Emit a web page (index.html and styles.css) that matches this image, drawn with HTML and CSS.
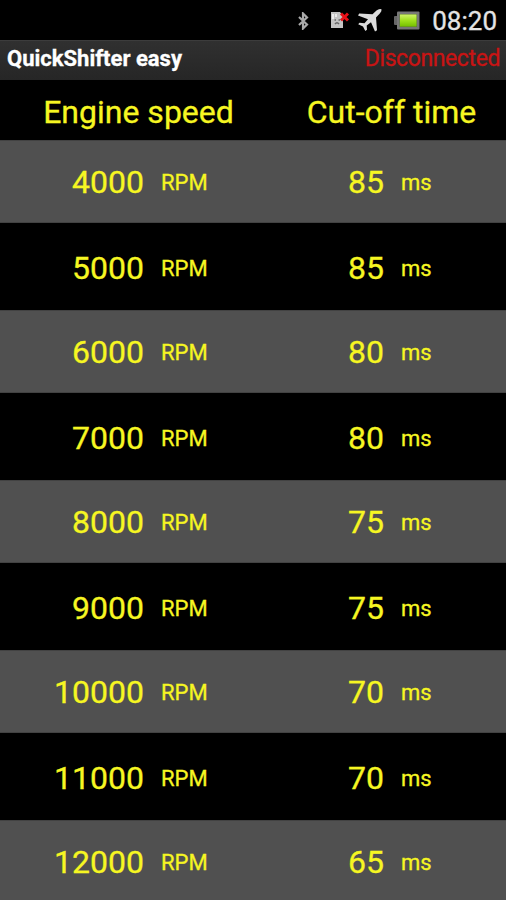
FILE: index.html
```html
<!DOCTYPE html>
<html lang="en">
  <head>
    <meta charset="UTF-8" />
    <meta name="viewport" content="width=device-width, initial-scale=1.0" />
    <title>QuickShifter easy</title>
    <link rel="stylesheet" href="styles.css">
  </head>
  <body>
    <!-- Status bar -->
    <div class="status-bar">
      <svg class="icon-bluetooth" width="12" height="18" viewBox="0 0 12 18">
        <path d="M2 5 L10 12.5 L6 16.5 V1.5 L10 5.5 L2 13" fill="none" stroke="#aaa" stroke-width="2.2" />
      </svg>
      <svg class="icon-sim" width="20" height="18" viewBox="0 0 20 18">
        <path d="M1 1 H10 L13 5 V17 H1 Z" fill="#c4c4c4" />
        <path d="M3 3 V8 M6 3 V6" stroke="#ececec" stroke-width="2" />
        <path d="M4.5 9 H6 M8.5 9 H10 M5 13 Q7 10.5 9 13" fill="none" stroke="#666" stroke-width="1.5" />
        <path d="M11 2.5 L18 9.5 M18 2.5 L11 9.5" stroke="#e81018" stroke-width="3" />
      </svg>
      <svg class="icon-plane" width="26" height="25" viewBox="0 0 26 25">
        <path d="M24.5 1.2 Q22 .3 19.5 2.5 L15.5 6.2 L2.2 5.6 L1 7.4 L11 11.2 L7.5 15.3 L2.5 14.8 L1.2 16.2 L6 18.5 L8.3 23 L10 21.8 L9.7 17.5 L14 14.2 L18 23.5 L20 22.2 L19 9.6 L22.8 5.5 Q25 3 24.5 1.2 Z" fill="#dcdcdc" />
      </svg>
      <svg class="icon-battery" width="26" height="19" viewBox="0 0 26 19">
        <defs>
          <linearGradient id="charge" x1="0" y1="0" x2="0" y2="1">
            <stop offset="0" stop-color="#d0f36a" />
            <stop offset="0.5" stop-color="#9fe01c" />
            <stop offset="1" stop-color="#75c000" />
          </linearGradient>
        </defs>
        <rect x="0" y="5" width="4" height="9" rx="1" fill="#666" />
        <rect x="3" y="0.5" width="22.5" height="18" rx="1" fill="#777" />
        <rect x="5.5" y="3" width="17.5" height="13" fill="#5f7a35" />
        <rect x="6" y="3.5" width="16.5" height="12" fill="url(#charge)" />
      </svg>
      <span class="clock">08:20</span>
    </div>

    <!-- Title bar -->
    <div class="title-bar">
      <span class="title">QuickShifter easy</span>
      <span class="connection">Disconnected</span>
    </div>

    <!-- Cut-off table -->
    <div class="header">
      <span>Engine speed</span>
      <span>Cut-off time</span>
    </div>
    <div class="row">
      <span class="speed">4000</span><span class="unit">RPM</span>
      <span class="time">85</span><span class="unit">ms</span>
    </div>
    <div class="row">
      <span class="speed">5000</span><span class="unit">RPM</span>
      <span class="time">85</span><span class="unit">ms</span>
    </div>
    <div class="row">
      <span class="speed">6000</span><span class="unit">RPM</span>
      <span class="time">80</span><span class="unit">ms</span>
    </div>
    <div class="row">
      <span class="speed">7000</span><span class="unit">RPM</span>
      <span class="time">80</span><span class="unit">ms</span>
    </div>
    <div class="row">
      <span class="speed">8000</span><span class="unit">RPM</span>
      <span class="time">75</span><span class="unit">ms</span>
    </div>
    <div class="row">
      <span class="speed">9000</span><span class="unit">RPM</span>
      <span class="time">75</span><span class="unit">ms</span>
    </div>
    <div class="row">
      <span class="speed">10000</span><span class="unit">RPM</span>
      <span class="time">70</span><span class="unit">ms</span>
    </div>
    <div class="row">
      <span class="speed">11000</span><span class="unit">RPM</span>
      <span class="time">70</span><span class="unit">ms</span>
    </div>
    <div class="row">
      <span class="speed">12000</span><span class="unit">RPM</span>
      <span class="time">65</span><span class="unit">ms</span>
    </div>
  </body>
</html>
```
FILE: styles.css
```css
body {
  margin: 0;
  height: 900px;
  overflow: hidden;
  background: #000;
  color: #f6f622;
  font-family: Roboto, "Liberation Sans", sans-serif;
  -webkit-text-stroke: 0.3px;
}
.status-bar {
  display: flex;
  align-items: center;
  justify-content: flex-end;
  height: 40px;
  padding-right: 9px;
  box-sizing: border-box;
}
.icon-bluetooth {
  margin: 2px 21px 0 0;
}
.icon-sim {
  margin-right: 7px;
}
.icon-plane {
  margin-right: 11px;
}
.icon-battery {
  margin-right: 12px;
}
.clock {
  color: #e4e4e4;
  font-size: 26px;
  line-height: 40px;
  padding-top: 2px;
}
.title-bar {
  display: flex;
  justify-content: space-between;
  height: 40px;
  padding: 0 6px 0 7px;
  box-sizing: border-box;
  line-height: 36px;
  background: linear-gradient(#303030, #262626);
  border-top: 1px solid #3c3c3c;
}
.title {
  color: #fff;
  font-size: 22px;
  font-weight: bold;
}
.connection {
  color: #c81414;
  font-size: 23px;
  letter-spacing: -0.4px;
}
.header {
  display: grid;
  grid-template-columns: 277px 229px;
  height: 60px;
  line-height: 64px;
  font-size: 32px;
  text-align: center;
}
.row {
  display: grid;
  grid-template-columns: 144px 132px 108px 1fr;
  align-items: center;
  height: 87px;
  padding-top: 2px;
  box-sizing: border-box;
}
.row:nth-of-type(even) {
  height: 83px;
  padding-top: 0;
  background: #505050;
  border-top: 1px solid #424242;
  border-bottom: 1px solid #424242;
}
.speed,
.time {
  font-size: 32px;
  text-align: right;
}
.unit {
  font-size: 22px;
  padding: 2px 0 0 17px;
}
```
